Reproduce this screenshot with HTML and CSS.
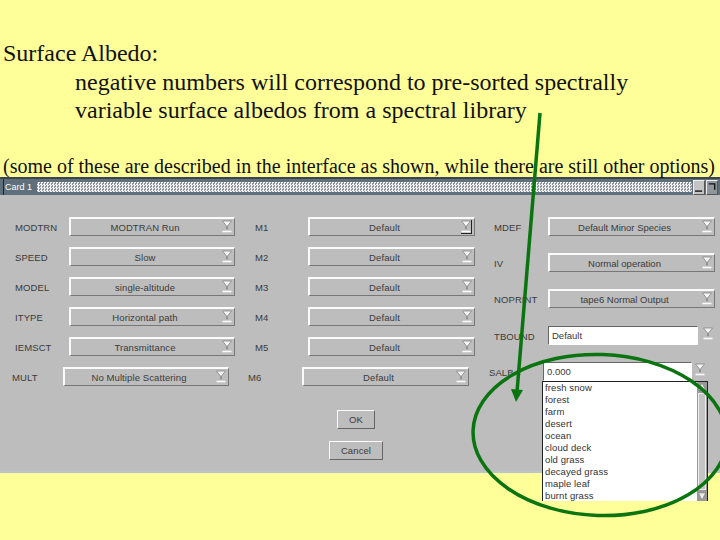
FILE: index.html
```html
<!DOCTYPE html>
<html lang="en">
<head>
<meta charset="utf-8">
<title>Surface Albedo</title>
<link rel="stylesheet" href="styles.css">
</head>
<body>
<svg width="0" height="0" class="defs">
  <symbol id="funnel" viewBox="0 0 10 13">
    <path d="M0.5 1 H9.5 L5.5 6 V9 H4.5 V6 Z" fill="#f4f4f4" stroke="#7a7a7a" stroke-width="0.7"/>
    <path d="M0.5 11.5 H9.5" stroke="#fbfbfb" stroke-width="1.6"/>
  </symbol>
</svg>
<main class="slide">
  <header class="intro">
    <p class="heading">Surface Albedo:</p>
    <p class="indent">negative numbers will correspond to pre-sorted spectrally</p>
    <p class="indent">variable surface albedos from a spectral library</p>
    <p class="note">(some of these are described in the interface as shown, while there are still other options)</p>
  </header>
  <section class="dialog">
    <div class="titlebar">
      <span class="grip"></span>
      <span class="title">Card 1</span>
      <span class="dots"></span>
      <span class="winbtn"><svg width="11" height="14" viewBox="0 0 11 14"><path d="M1 11.5H9" stroke="#111" stroke-width="1.5"/></svg></span>
      <span class="winbtn dark"><svg width="11" height="14" viewBox="0 0 11 14"><path d="M2 3.5H8.5V10" stroke="#111" stroke-width="1.5" fill="none"/></svg></span>
    </div>
    <div class="body">
      <div class="left">
        <div class="row"><span class="lab l1">MODTRN</span><span class="sel s1">MODTRAN Run<svg class="fn"><use href="#funnel"/></svg></span><span class="lab l2">M1</span><span class="sel s2">Default<svg class="fn boxed"><use href="#funnel"/></svg></span></div>
        <div class="row"><span class="lab l1">SPEED</span><span class="sel s1">Slow<svg class="fn"><use href="#funnel"/></svg></span><span class="lab l2">M2</span><span class="sel s2">Default<svg class="fn"><use href="#funnel"/></svg></span></div>
        <div class="row"><span class="lab l1">MODEL</span><span class="sel s1">single-altitude<svg class="fn"><use href="#funnel"/></svg></span><span class="lab l2">M3</span><span class="sel s2">Default<svg class="fn"><use href="#funnel"/></svg></span></div>
        <div class="row"><span class="lab l1">ITYPE</span><span class="sel s1">Horizontal path<svg class="fn"><use href="#funnel"/></svg></span><span class="lab l2">M4</span><span class="sel s2">Default<svg class="fn"><use href="#funnel"/></svg></span></div>
        <div class="row"><span class="lab l1">IEMSCT</span><span class="sel s1">Transmittance<svg class="fn"><use href="#funnel"/></svg></span><span class="lab l2">M5</span><span class="sel s2">Default<svg class="fn"><use href="#funnel"/></svg></span></div>
        <div class="row shifted"><span class="lab l3">MULT</span><span class="sel s1">No Multiple Scattering<svg class="fn"><use href="#funnel"/></svg></span><span class="lab l4">M6</span><span class="sel s2">Default<svg class="fn"><use href="#funnel"/></svg></span></div>
        <div class="actions">
          <button class="btn ok">OK</button>
          <button class="btn cancel">Cancel</button>
        </div>
      </div>
      <div class="right">
        <div class="rrow"><span class="lab l5">MDEF</span><span class="sel s2">Default Minor Species<svg class="fn"><use href="#funnel"/></svg></span></div>
        <div class="rrow"><span class="lab l5">IV</span><span class="sel s2">Normal operation<svg class="fn"><use href="#funnel"/></svg></span></div>
        <div class="rrow"><span class="lab l5">NOPRINT</span><span class="sel s2">tape6 Normal Output<svg class="fn"><use href="#funnel"/></svg></span></div>
        <div class="rrow"><span class="lab l5">TBOUND</span><span class="combo"><span class="field">Default</span><svg class="fn"><use href="#funnel"/></svg></span></div>
        <div class="rrow shifted"><span class="lab l5">SALB</span><span class="combo salb"><span class="field">0.000</span><svg class="fn"><use href="#funnel"/></svg></span></div>
      </div>
    </div>
  </section>
  <div class="dropdown">
    <ul class="items">
      <li>fresh snow</li><li>forest</li><li>farm</li><li>desert</li><li>ocean</li>
      <li>cloud deck</li><li>old grass</li><li>decayed grass</li><li>maple leaf</li><li>burnt grass</li>
    </ul>
    <div class="scroll">
      <svg width="10" height="10" viewBox="0 0 9 10"><path d="M4.5 1L8 8H1Z" fill="#eee" stroke="#777" stroke-width=".5"/></svg>
      <span class="thumb"></span>
      <svg width="10" height="10" viewBox="0 0 9 10"><path d="M4.5 9L8 2H1Z" fill="#eee" stroke="#777" stroke-width=".5"/></svg>
    </div>
  </div>
  <svg class="marks" width="720" height="540" viewBox="0 0 720 540">
    <g fill="none" stroke="#0a7510" stroke-width="3.5">
      <path d="M540 113 L517 392"/>
      <ellipse cx="600" cy="435" rx="127" ry="80.5" transform="rotate(2 600 435)"/>
    </g>
    <path d="M511 389 L523 390 L516 402 Z" fill="#0a7510"/>
  </svg>
</main>
</body>
</html>
```
FILE: styles.css
```css
* { box-sizing: border-box; }
html, body { margin: 0; padding: 0; }
body { width: 720px; height: 540px; overflow: hidden; background: #ffff99; }
.defs { position: absolute; }
.slide { position: relative; width: 720px; height: 540px; overflow: hidden; }
.intro { font-family: "Liberation Serif", serif; color: #111; height: 177px; padding: 39px 0 0 3px; }
.intro p { margin: 0; font-size: 24px; line-height: 28.5px; }
.intro .indent { padding-left: 72px; }
.intro .note { font-size: 20px; line-height: 24px; margin-top: 29px; white-space: nowrap; }
.dialog { height: 296px; background: #bdbdbd; border-bottom: 2px solid #b9c4cc; font-family: "Liberation Sans", sans-serif; font-size: 9.5px; color: #3a3a3a; }
.titlebar { height: 18px; display: flex; align-items: center; background: #5f6f7c; border-top: 2px solid #3d4650; padding: 0 0 0 3px; color: #fff; }
.grip { width: 1px; height: 16px; background: #222; margin-right: 1px; }
.title { width: 32px; font-size: 9px; }
.dots { width: 655px; height: 10px; background: repeating-conic-gradient(#f4f4f4 0 25%, #8a9298 0 50%) 0 0 / 3px 3px; }
.winbtn { width: 12px; height: 15px; margin-left: 1px; background: #c4c4c4; border: 1px solid #eee; border-right-color: #555; border-bottom-color: #555; display: flex; align-items: center; justify-content: center; }
.winbtn.dark { background: #8f969c; }
.winbtn:first-of-type { margin-left: 3px; }
.body { display: flex; padding-top: 22px; }
.left { width: 489px; flex: none; }
.row { display: flex; align-items: center; height: 30px; padding-bottom: 11px; letter-spacing: 0.1px; }
.lab { white-space: nowrap; letter-spacing: 0.1px; padding-top: 2px; }
.l1 { width: 54px; margin-left: 15px; }
.l2 { width: 53px; margin-left: 20px; }
.l3 { width: 51px; margin-left: 12px; }
.l4 { width: 54px; margin-left: 19px; }
.l5 { width: 54px; flex: none; }
.sel { position: relative; display: flex; align-items: center; justify-content: center; height: 19px; padding-right: 15px; border: 1px solid; border-color: #fbfbfb #777 #777 #fbfbfb; border-width: 2px 1px 1px 2px; white-space: nowrap; }
.s1 { width: 166px; flex: none; }
.s2 { width: 167px; flex: none; }
.fn { position: absolute; right: 2px; top: 1px; width: 10px; height: 13px; }
.fn.boxed { border-right: 1px solid #222; border-bottom: 1px solid #222; width: 11px; height: 14px; top: 1px; }
.actions { display: flex; flex-direction: column; align-items: center; gap: 12px; width: 712px; padding-top: 13px; }
.btn { display: block; height: 19px; padding: 0; background: #bdbdbd; font: 9.5px "Liberation Sans", sans-serif; color: #3a3a3a; letter-spacing: 0.1px; border: 1px solid; border-color: #fbfbfb #666 #666 #fbfbfb; }
.ok { width: 38px; }
.cancel { width: 54px; }
.right { flex: none; width: 231px; padding-left: 5px; }
.rrow { display: flex; align-items: center; height: 19px; margin-bottom: 17px; }
.rrow:nth-child(3) { margin-bottom: 18px; }
.rrow.shifted { margin-left: -5px; margin-bottom: 0; }
.combo { position: relative; display: flex; width: 167px; height: 19px; flex: none; }
.field { width: 150px; height: 19px; padding-left: 3px; line-height: 17px; background: #fff; border: 1px solid; border-color: #666 #fff #fff #666; }
.combo.salb .field { width: 149px; }
.combo.salb { width: 164px; }
.dropdown { position: absolute; left: 542px; top: 381px; width: 166px; height: 120px; display: flex; background: #fff; border: 1px solid #222; border-bottom: 0; font-family: "Liberation Sans", sans-serif; font-size: 9.5px; color: #333; }
.items { flex: 1; margin: 0; padding: 0 0 0 2px; list-style: none; letter-spacing: 0.1px; }
.items li { height: 12px; line-height: 12px; }
.scroll { width: 10px; display: flex; flex-direction: column; background: #9a9a9a; justify-content: space-between; }
.thumb { flex: 1; margin: 1px 1px; background: #c4c4c4; border: 1px solid #ececec; }
.marks { position: absolute; left: 0; top: 0; pointer-events: none; }
```
